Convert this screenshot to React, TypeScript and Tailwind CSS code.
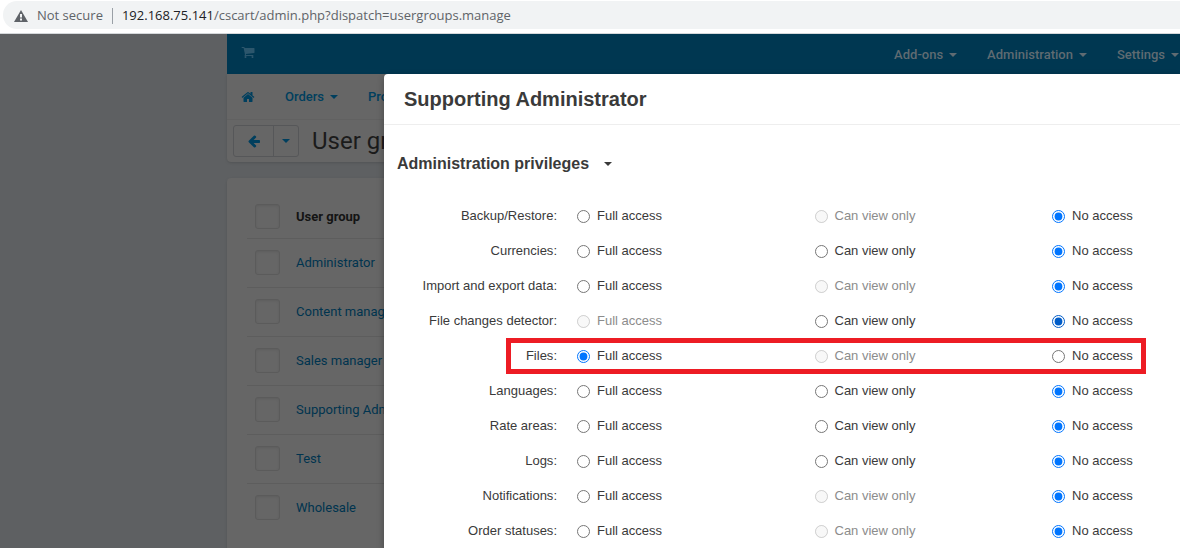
import React from "react";

type Level = "full" | "view" | "none";

interface Privilege {
  name: string;
  value: Level;
  disabled?: Level;
  highlighted?: boolean;
  active?: boolean;
}

const privileges: Privilege[] = [
  { name: "Backup/Restore", value: "none", disabled: "view" },
  { name: "Currencies", value: "none" },
  { name: "Import and export data", value: "none", disabled: "view" },
  { name: "File changes detector", value: "none", disabled: "full", active: true },
  { name: "Files", value: "full", disabled: "view", highlighted: true },
  { name: "Languages", value: "none" },
  { name: "Rate areas", value: "none" },
  { name: "Logs", value: "none" },
  { name: "Notifications", value: "none", disabled: "view" },
  { name: "Order statuses", value: "none", disabled: "view" },
];

const levels: { id: Level; label: string }[] = [
  { id: "full", label: "Full access" },
  { id: "view", label: "Can view only" },
  { id: "none", label: "No access" },
];

const groups = [
  "Administrator",
  "Content manager",
  "Sales manager",
  "Supporting Administrator",
  "Test",
  "Wholesale",
];

const HOME =
  "M1472 992v480q0 26-19 45t-45 19h-384v-384h-256v384h-384q-26 0-45-19t-19-45v-480q0-1 .5-3t.5-3l575-474 575 474q1 2 1 6zm223-69l-62 74q-8 9-21 11h-3q-13 0-21-7l-692-577-692 577q-12 8-24 7-13-2-21-11l-62-74q-8-10-7-23.5t11-21.5l719-599q32-26 76-26t76 26l244 204v-195q0-14 9-23t23-9h192q14 0 23 9t9 23v408l219 182q10 8 11 21.5t-7 23.5z";
const CART =
  "M704 1536q0 52-38 90t-90 38-90-38-38-90 38-90 90-38 90 38 38 90zm896 0q0 52-38 90t-90 38-90-38-38-90 38-90 90-38 90 38 38 90zm128-1088v512q0 24-16.5 42.5t-40.5 21.5l-1044 122q13 60 13 70 0 16-24 64h920q26 0 45 19t19 45-19 45-45 19h-1024q-26 0-45-19t-19-45q0-11 8-31.5t16-36 21.5-40 15.5-29.5l-177-823h-204q-26 0-45-19t-19-45 19-45 45-19h256q16 0 28.5 6.5t19.5 15.5 13 24.5 8 26 5.5 29.5 4.5 26h1201q26 0 45 19t19 45z";
const ARROW =
  "M1664 896v128q0 53-32.5 90.5t-84.5 37.5h-704l293 294q38 36 38 90t-38 90l-75 76q-37 37-90 37-52 0-91-37l-651-652q-37-37-37-90 0-52 37-91l651-650q38-38 91-38 52 0 90 38l75 74q38 38 38 91t-38 91l-293 293h704q52 0 84.5 37.5t32.5 90.5z";

function Glyph({ d, className }: { d: string; className: string }) {
  return (
    <svg viewBox="0 0 1792 1792" className={className} fill="currentColor" aria-hidden="true">
      <path d={d} />
    </svg>
  );
}

function Caret() {
  return (
    <svg viewBox="0 0 8 4" className="h-1 w-2 shrink-0" fill="currentColor" aria-hidden="true">
      <path d="M0 0h8L4 4z" />
    </svg>
  );
}

function AddressBar() {
  return (
    <div className="shrink-0 border-b border-[#d5d8db] bg-white pt-px pb-1 pl-[3px] font-['Open_Sans',sans-serif] text-[13px]">
      <div className="flex h-7 items-center rounded-l-full bg-[#f1f3f4] pt-px pl-[11px] text-[#5f6368]">
        <svg viewBox="0 0 14 12" className="h-3 w-3.5" aria-hidden="true">
          <path d="M7 0l7 12H0z" fill="#5f6368" />
          <path d="M6 4h2v3.4H6zM6 8.6h2v1.8H6z" fill="#f1f3f4" />
        </svg>
        <button type="button" className="ml-[9px]">
          Not secure
        </button>
        <span className="mx-[9px] h-4 w-px bg-[#9aa0a6]" />
        <a href="#url" className="whitespace-nowrap">
          <span className="text-[#202124]">192.168.75.141</span>
          /cscart/admin.php?dispatch=usergroups.manage
        </a>
      </div>
    </div>
  );
}

function TopBar() {
  return (
    <header className="flex h-10 items-center justify-between bg-[#003751] pr-px pl-3.5 font-medium text-[#5f6b72]">
      <a href="#storefront" aria-label="Storefront" className="pb-1 text-[#2c566c]">
        <Glyph d={CART} className="size-3.5" />
      </a>
      <nav className="flex gap-[30px] pt-px">
        {["Add-ons", "Administration", "Settings"].map((item) => (
          <a key={item} href={"#" + item} className="flex items-center gap-1.5">
            {item}
            <Caret />
          </a>
        ))}
      </nav>
    </header>
  );
}

function UserGroups() {
  return (
    <div className="min-w-0 flex-1">
      <TopBar />
      <div className="rounded-b-sm bg-[#666] shadow-sm">
        <nav className="flex h-[46px] items-center gap-[30px] border-b border-[#616161] pl-3.5 font-medium text-[#003f5e]">
          <a href="#home" aria-label="Home">
            <Glyph d={HOME} className="size-3.5" />
          </a>
          <a href="#orders" className="flex items-center gap-1.5">
            Orders
            <Caret />
          </a>
          <a href="#products" className="flex items-center gap-1.5">
            Products
            <Caret />
          </a>
        </nav>
        <div className="flex h-[42px] items-center pb-px pl-1.5">
          <div className="flex h-8 rounded-[3px] border border-[#565759] text-[#003f5e]">
            <button type="button" aria-label="Back" className="flex w-10 items-center justify-center border-r border-[#565759]">
              <Glyph d={ARROW} className="size-3.5" />
            </button>
            <button type="button" aria-label="Recent pages" className="flex w-6 items-center justify-center">
              <Caret />
            </button>
          </div>
          <h1 className="pl-[13px] text-2xl text-[#1b1b1b]">User groups</h1>
        </div>
      </div>
      <main className="mt-4 rounded-t-sm bg-[#666] px-5 pt-[18px] pb-10 shadow-sm">
        <table className="w-full text-left">
          <thead>
            <tr className="h-[42px] border-b border-[#5d5d5d]">
              <th className="w-[49px] pl-2">
                <GroupCheckbox label="Select all" />
              </th>
              <th className="font-bold text-[#141414]">User group</th>
            </tr>
          </thead>
          <tbody>
            {groups.map((group) => (
              <tr key={group} className="h-[49px] border-b border-[#5d5d5d] last:border-b-0">
                <td className="pl-2">
                  <GroupCheckbox label={group} />
                </td>
                <td>
                  <a href={"#" + group} className="text-[#00344f]">
                    {group}
                  </a>
                </td>
              </tr>
            ))}
          </tbody>
        </table>
      </main>
    </div>
  );
}

function GroupCheckbox({ label }: { label: string }) {
  return (
    <input
      type="checkbox"
      aria-label={label}
      className="block size-[25px] appearance-none rounded-[3px] border border-[#5b5b5b] bg-[#666] shadow-[inset_0_1px_2px_#5e5e5e]"
    />
  );
}

function PrivilegeRow({ item }: { item: Privilege }) {
  return (
    <div
      role="radiogroup"
      aria-label={item.name}
      className="relative grid h-[35px] grid-cols-[193px_1fr_1fr_128px] items-center"
    >
      <span className="pr-5 text-right">{item.name}:</span>
      {levels.map(({ id, label }) => {
        const off = item.disabled === id;
        return (
          <label
            key={id}
            className={off ? "flex items-center gap-[7px] text-[#8c8c8c]" : "flex items-center gap-[7px]"}
          >
            <input
              type="radio"
              name={item.name}
              defaultChecked={item.value === id}
              disabled={off}
              className={item.active ? "mt-px size-[13px] accent-[#005cc8]" : "mt-px size-[13px]"}
            />
            {label}
          </label>
        );
      })}
      {item.highlighted && (
        <span className="pointer-events-none absolute top-0 right-[34px] -bottom-px left-[122px] border-5 border-[#ed1c24]" />
      )}
    </div>
  );
}

function PrivilegesDialog() {
  return (
    <section
      role="dialog"
      aria-label="Supporting Administrator"
      className="absolute top-10 right-0 bottom-0 left-[384px] overflow-hidden rounded-tl bg-white font-['Liberation_Sans',Arial,sans-serif] text-[#3a3a3a] shadow-[0_3px_7px_rgba(0,0,0,0.3)]"
    >
      <h2 className="flex h-[51px] items-center border-b border-[#eee] pl-5 text-xl font-bold">
        Supporting Administrator
      </h2>
      <button type="button" className="mt-[27px] ml-[13px] flex h-6 items-center gap-[15px] text-base font-bold">
        Administration privileges
        <Caret />
      </button>
      <div className="mt-[22px]">
        {privileges.map((item) => (
          <PrivilegeRow key={item.name} item={item} />
        ))}
      </div>
    </section>
  );
}

export default function App() {
  return (
    <div className="flex h-screen flex-col overflow-hidden">
      <AddressBar />
      <div className="relative flex min-h-0 flex-1 overflow-hidden bg-[#5e6062] pl-[227px] font-[Roboto,sans-serif] text-[13px]">
        <UserGroups />
        <PrivilegesDialog />
      </div>
    </div>
  );
}
